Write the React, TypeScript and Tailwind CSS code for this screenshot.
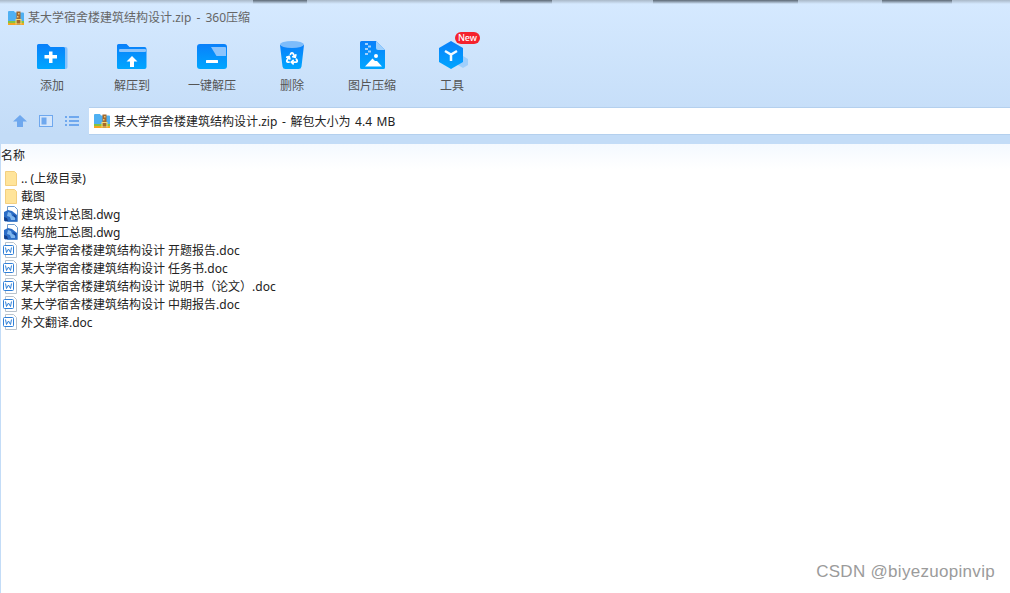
import React from 'react';
import { Recycle } from 'lucide-react';

const FONT = 'font-["Noto_Sans","Noto_Sans_CJK_SC","Liberation_Sans",sans-serif]';

const ZipIcon: React.FC = () => (
  <svg width="16" height="16" viewBox="0 0 16 16" className="shrink-0">
    <path d="M0 2A1 1 0 0 1 1 1h5l1 1.500h8a1 1 0 0 1 1 1V11H0z" fill="#4fb0f2" />
    <rect x="0" y="11" width="16" height="2" fill="#86c440" />
    <rect x="0" y="13" width="16" height="2" fill="#f5a623" />
    <rect x="8.500" y="1.500" width="4" height="13.500" fill="#a5692a" />
    <rect x="10" y="3" width="1.500" height="1.500" fill="#e8c27a" />
    <rect x="9" y="6" width="1.500" height="1.500" fill="#e8c27a" />
    <rect x="8" y="9.500" width="5" height="4.500" fill="none" stroke="#f7d774" strokeWidth="1" />
  </svg>
);

const Grad: React.FC<{ id: string }> = ({ id }) => (
  <defs>
    <linearGradient id={id} x1="0" y1="0" x2="0" y2="1">
      <stop offset="0" stopColor="#0a80fa" />
      <stop offset="1" stopColor="#00a6ff" />
    </linearGradient>
  </defs>
);

const AddIcon = () => (
  <svg width="32" height="28" viewBox="0 0 32 28">
    <Grad id="g1" />
    <path d="M14 5h15.500a2 2 0 0 1 2 2v18a2 2 0 0 1-2 2H20z" fill="#86c1fb" />
    <path d="M1 3.500a1.500 1.500 0 0 1 1.500-1.500h9l3 3h13a1.500 1.500 0 0 1 1.500 1.500V27H2.500A1.500 1.500 0 0 1 1 25.500z" fill="url(#g1)" />
    <path d="M13 9.500h3.500V13H21v3.500h-4.500V21H13v-4.500H8.500V13H13z" fill="#fff" />
  </svg>
);

const ExtractIcon = () => (
  <svg width="32" height="28" viewBox="0 0 32 28">
    <Grad id="g2" />
    <path d="M1 3.500a1.500 1.500 0 0 1 1.500-1.500h8l3 3h15a2 2 0 0 1 2 2v18a2 2 0 0 1-2 2h-26A1.500 1.500 0 0 1 1 25.500z" fill="url(#g2)" />
    <rect x="3" y="7" width="27" height="3" rx="1" fill="#8cc4fc" />
    <path d="M16 14l5.500 5.500H18V25h-4v-5.500h-3.500z" fill="#fff" />
  </svg>
);

const OneKeyIcon = () => (
  <svg width="32" height="28" viewBox="0 0 32 28">
    <Grad id="g3" />
    <rect x="1" y="2" width="30" height="25" rx="3" fill="url(#g3)" />
    <path d="M15 5h14a1 1 0 0 1 1 1v8H20.500z" fill="#8cc4fc" />
    <rect x="10" y="18" width="12" height="3" rx="0.500" fill="#fff" />
  </svg>
);

const BinIcon = () => (
  <svg width="26" height="30" viewBox="0 0 26 30">
    <Grad id="g4" />
    <path d="M1 5h24l-2.500 21.500a3 3 0 0 1-3 2.500H6.500a3 3 0 0 1-3-2.500z" fill="url(#g4)" />
    <ellipse cx="13" cy="4.500" rx="12" ry="3.500" fill="#7dbcfb" />
    <Recycle x="6" y="11" width="14" height="14" color="#fff" strokeWidth={3} />
  </svg>
);

const ImageZipIcon = () => (
  <svg width="26" height="30" viewBox="0 0 26 30">
    <Grad id="g5" />
    <path d="M1 2.500a1.500 1.500 0 0 1 1.500-1.500H17l9 9v17.500a1.500 1.500 0 0 1-1.500 1.500h-22A1.500 1.500 0 0 1 1 27.500z" fill="url(#g5)" />
    <path d="M17 1l9 9h-7a2 2 0 0 1-2-2z" fill="#9fd0fd" />
    <g fill="#9fd0fd">
      <rect x="6" y="3" width="3" height="2" />
      <rect x="9" y="5.500" width="3" height="2" />
      <rect x="6" y="8" width="3" height="2" />
      <rect x="9" y="10.500" width="3" height="2" />
      <rect x="6" y="13" width="3" height="2" />
    </g>
    <circle cx="17" cy="16" r="2" fill="#fff" />
    <path d="M6 26.500l7.500-8 2.500 2.500h2l5 5.500z" fill="#fff" />
  </svg>
);

const ToolIcon = () => (
  <svg width="32" height="30" viewBox="0 0 32 30">
    <Grad id="g6" />
    <path d="M27 16l5 3v6l-5 3-5-3v-6z" fill="#a0cffc" />
    <path d="M15 1l12 7v14l-12 7L3 22V8z" fill="url(#g6)" />
    <path d="M9 11l6 3.500 6-3.500M15 14.500V21" fill="none" stroke="#f2faff" strokeWidth="2.500" />
  </svg>
);

const tools = [
  { label: '添加', icon: <AddIcon /> },
  { label: '解压到', icon: <ExtractIcon /> },
  { label: '一键解压', icon: <OneKeyIcon /> },
  { label: '删除', icon: <BinIcon /> },
  { label: '图片压缩', icon: <ImageZipIcon /> },
  { label: '工具', icon: <ToolIcon />, badge: true },
];

const FolderIcon = () => (
  <svg width="16" height="16" viewBox="0 0 16 16" className="shrink-0">
    <path d="M2.500 1.500h9l2 2v12h-11z" fill="#ffe49a" stroke="#f3cf7f" strokeWidth="1" />
  </svg>
);

const DwgIcon = () => (
  <svg width="16" height="16" viewBox="0 0 16 16" className="shrink-0">
    <path d="M4.500 0.500h7l3 3v12h-10z" fill="#fff" stroke="#6f9ccf" />
    <path d="M1 6l4-2 4 1 5 4v6.500H2L1 14z" fill="#2a6cc6" />
    <path d="M5 6l3 1 1 3 3 1v3H8l-1-3-3-1z" fill="#7fb6ee" />
    <path d="M1 11l3 1 1 3H1.500z" fill="#123f8c" />
    <path d="M10 8l3 2v2l-2-1z" fill="#14499c" />
  </svg>
);

const DocIcon = () => (
  <svg width="16" height="16" viewBox="0 0 16 16" className="shrink-0">
    <path d="M2.500 0.500h8l3 3v12h-11z" fill="#fff" stroke="#b8c2cc" />
    <rect x="0.500" y="3.500" width="10" height="9" rx="1" fill="#fff" stroke="#2f7fd8" />
    <path d="M2.500 5.500l1 5 2-3.500 2 3.500 1-5" fill="none" stroke="#2f7fd8" strokeWidth="1" />
  </svg>
);

const files = [
  { name: '.. (上级目录)', icon: <FolderIcon /> },
  { name: '截图', icon: <FolderIcon /> },
  { name: '建筑设计总图.dwg', icon: <DwgIcon /> },
  { name: '结构施工总图.dwg', icon: <DwgIcon /> },
  { name: '某大学宿舍楼建筑结构设计 开题报告.doc', icon: <DocIcon /> },
  { name: '某大学宿舍楼建筑结构设计 任务书.doc', icon: <DocIcon /> },
  { name: '某大学宿舍楼建筑结构设计 说明书（论文）.doc', icon: <DocIcon /> },
  { name: '某大学宿舍楼建筑结构设计 中期报告.doc', icon: <DocIcon /> },
  { name: '外文翻译.doc', icon: <DocIcon /> },
];

export default function App() {
  return (
    <div className={`relative flex h-[593px] w-[1010px] flex-col overflow-hidden bg-white ${FONT}`}>
      {/* window shadow along the top edge */}
      <div className="flex h-[4px] shrink-0 bg-gradient-to-b from-[#a9b8c8] to-[#d5e9ff]">
        <div className="w-[253px]" />
        <div className="w-[54px] bg-gradient-to-b from-[#5c6874] to-[#d5e9ff]" />
        <div className="w-[193px]" />
        <div className="w-[52px] bg-gradient-to-b from-[#5c6874] to-[#d5e9ff]" />
        <div className="w-[101px]" />
        <div className="w-[145px] bg-gradient-to-b from-[#5c6874] to-[#d5e9ff]" />
        <div className="w-[84px]" />
        <div className="w-[70px] bg-gradient-to-b from-[#5c6874] to-[#d5e9ff]" />
      </div>

      {/* Header */}
      <div className="flex h-[131px] shrink-0 flex-col bg-gradient-to-b from-[#d5e9ff] to-[#c3dcf7]">
        <div className="flex h-[27px] shrink-0 items-center gap-1 pl-2 text-[12px] text-[#666]">
          <ZipIcon />
          <span className="[word-spacing:2px]">某大学宿舍楼建筑结构设计.zip - 360压缩</span>
        </div>

        <div className="flex h-[76px] shrink-0 pl-3">
          {tools.map((t) => (
            <div key={t.label} className="relative flex w-[80px] flex-col items-center">
              <div className="flex h-[40px] w-full items-end justify-center pb-px">{t.icon}</div>
              <span className="mt-[6px] text-[12px] leading-[18px] text-[#555]">{t.label}</span>
              {t.badge && (
                <span className="absolute left-[43px] top-[1px] flex h-[12px] w-[25px] items-center justify-center rounded-full bg-[#f5222d] text-[9px] font-medium text-white">
                  New
                </span>
              )}
            </div>
          ))}
        </div>

        {/* Address row */}
        <div className="flex h-[28px] shrink-0 items-center">
          <div className="flex w-[89px] shrink-0 items-center pl-[13px]">
            <svg width="14" height="14" viewBox="0 0 14 14" className="mr-3">
              <path d="M7 1l7 6.500H10V13H4V7.500H0z" fill="#6fa8ee" />
            </svg>
            <svg width="14" height="12" viewBox="0 0 14 12" className="mr-3">
              <rect x="0.500" y="0.500" width="13" height="11" fill="#d5e6fb" stroke="#6fa8ee" />
              <rect x="2.500" y="2.500" width="5" height="7" fill="#6fa8ee" />
            </svg>
            <svg width="14" height="12" viewBox="0 0 14 12">
              <g fill="#6fa8ee">
                <rect x="0" y="1" width="2" height="2" />
                <rect x="4" y="1" width="10" height="2" />
                <rect x="0" y="5" width="2" height="2" />
                <rect x="4" y="5" width="10" height="2" />
                <rect x="0" y="9" width="2" height="2" />
                <rect x="4" y="9" width="10" height="2" />
              </g>
            </svg>
          </div>
          <div className="flex h-full flex-1 items-center gap-1 border-y border-[#b4d0ee] bg-white pl-[5px] text-[12px] text-[#222]">
            <ZipIcon />
            <span className="pt-[2px] [word-spacing:1.5px]">某大学宿舍楼建筑结构设计.zip - 解包大小为 4.4 MB</span>
          </div>
        </div>
      </div>
      <div className="h-[9px] shrink-0 bg-[#c3dcf7]" />

      {/* File list */}
      <div className="flex flex-1 flex-col border-l border-[#c3dcf7]">
        <div className="h-[25px] shrink-0 bg-gradient-to-b from-[#f4f9ff] to-white text-[12px] leading-[24px] text-[#222]">
          名称
        </div>
        <div className="flex flex-col">
          {files.map((f) => (
            <div key={f.name} className="flex h-[18px] items-center gap-[2px] pl-[2px] text-[12px] text-[#222]">
              {f.icon}
              <span className="whitespace-pre pt-[2px]">{f.name}</span>
            </div>
          ))}
        </div>
      </div>

      <span className="absolute bottom-[9px] right-[15px] font-['Liberation_Sans'] text-[17px] tracking-[0.3px] text-[#9b9b9b]">
        CSDN @biyezuopinvip
      </span>
    </div>
  );
}
